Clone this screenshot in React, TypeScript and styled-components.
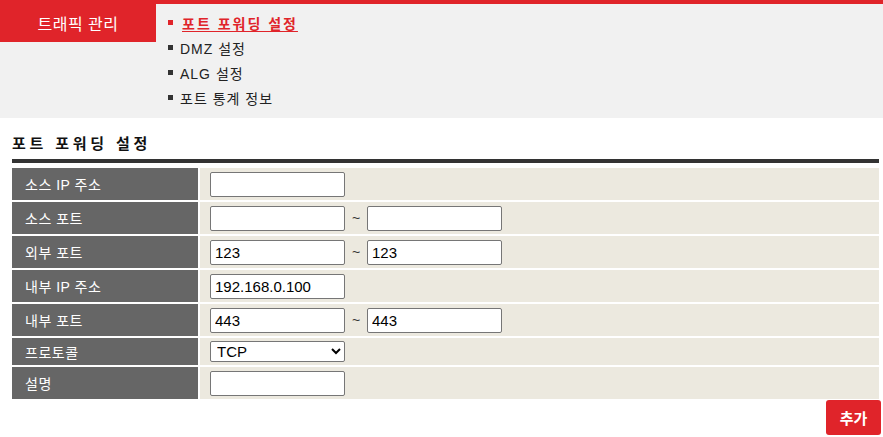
import * as React from 'react';
import styled, { createGlobalStyle } from 'styled-components';

const GlobalStyle = createGlobalStyle`
  html, body {
    margin: 0;
    padding: 0;
    background: #ffffff;
    font-family: 'Liberation Sans', 'Noto Sans CJK KR', sans-serif;
    color: #222222;
  }
`;

const Header = styled.header`
  display: flex;
  align-items: flex-start;
  height: 114px;
  border-top: 4px solid #e0242a;
  background: #f1f1f1;
`;

const Tab = styled.div`
  width: 156px;
  height: 38px;
  display: flex;
  align-items: center;
  justify-content: center;
  background: #e0242a;
  color: #ffffff;
  font-size: 16px;
  letter-spacing: 0.5px;
`;

const Menu = styled.ul`
  list-style: none;
  margin: 0;
  padding: 6px 0 0 12px;
`;

const MenuItem = styled.li<{ $active?: boolean }>`
  display: flex;
  align-items: center;
  height: 25px;
  font-size: 14px;
  color: ${(p) => (p.$active ? '#e0242a' : '#222222')};
  font-weight: ${(p) => (p.$active ? 'bold' : 'normal')};
  letter-spacing: ${(p) => (p.$active ? '2px' : '1px')};
  text-decoration: ${(p) => (p.$active ? 'underline' : 'none')};
  text-underline-offset: 2px;

  &::before {
    content: '';
    width: 5px;
    height: 5px;
    margin-right: ${(p) => (p.$active ? '9px' : '7px')};
    background: ${(p) => (p.$active ? '#e0242a' : '#333333')};
  }
`;

const Content = styled.main`
  padding: 0 4px 0 12px;
`;

const Title = styled.h2`
  margin: 0;
  padding-top: 14px;
  height: 27px;
  font-size: 15px;
  font-weight: bold;
  letter-spacing: 3.8px;
  color: #111111;
  border-bottom: 4px solid #333333;
`;

const Form = styled.div`
  margin-top: 5px;
  display: flex;
  flex-direction: column;
  gap: 2px;
  background: #ffffff;
`;

const Row = styled.div<{ $short?: boolean }>`
  display: grid;
  grid-template-columns: 186px 1fr;
  column-gap: 2px;
  height: ${(p) => (p.$short ? '27px' : '32px')};
`;

const Label = styled.div`
  display: flex;
  align-items: center;
  padding-left: 13px;
  background: #666666;
  color: #ffffff;
  font-size: 14px;
  letter-spacing: 0.5px;
`;

const Value = styled.div`
  display: flex;
  align-items: center;
  padding-left: 10px;
  background: #ece9df;
`;

const Input = styled.input`
  box-sizing: border-box;
  width: 135px;
  height: 25px;
  padding: 0 4px;
  border: 1px solid #767676;
  border-radius: 2px;
  background: #ffffff;
  font-family: 'Liberation Sans', sans-serif;
  font-size: 15px;
  color: #000000;
  outline: none;
`;

const Tilde = styled.span`
  width: 22px;
  text-align: center;
  font-size: 14px;
  color: #333333;
`;

const Select = styled.select`
  box-sizing: border-box;
  width: 135px;
  height: 21px;
  padding: 0 2px;
  border: 1px solid #767676;
  border-radius: 2px;
  background: #ffffff;
  font-family: 'Liberation Sans', sans-serif;
  font-size: 15px;
  color: #000000;
`;

const Actions = styled.div`
  display: flex;
  justify-content: flex-end;
  margin: 1px -2px 0 0;
`;

const AddButton = styled.button`
  width: 55px;
  height: 35px;
  border: none;
  border-radius: 3px;
  background: #e0242a;
  color: #ffffff;
  font-family: 'Noto Sans CJK KR', sans-serif;
  font-size: 15px;
  font-weight: bold;
  cursor: pointer;
`;

type Field = {
  label: string;
  from?: string;
  to?: string;
  range?: boolean;
};

const fields: Field[] = [
  { label: '소스 IP 주소', from: '' },
  { label: '소스 포트', from: '', to: '', range: true },
  { label: '외부 포트', from: '123', to: '123', range: true },
  { label: '내부 IP 주소', from: '192.168.0.100' },
  { label: '내부 포트', from: '443', to: '443', range: true },
];

const App: React.FC = () => {
  return (
    <>
      <GlobalStyle />
      <Header>
        <Tab>트래픽 관리</Tab>
        <Menu>
          <MenuItem $active>포트 포워딩 설정</MenuItem>
          <MenuItem>DMZ 설정</MenuItem>
          <MenuItem>ALG 설정</MenuItem>
          <MenuItem>포트 통계 정보</MenuItem>
        </Menu>
      </Header>
      <Content>
        <Title>포트 포워딩 설정</Title>
        <Form>
          {fields.map((f) => (
            <Row key={f.label}>
              <Label>{f.label}</Label>
              <Value>
                <Input defaultValue={f.from} />
                {f.range && (
                  <>
                    <Tilde>~</Tilde>
                    <Input defaultValue={f.to} />
                  </>
                )}
              </Value>
            </Row>
          ))}
          <Row $short>
            <Label>프로토콜</Label>
            <Value>
              <Select defaultValue="TCP">
                <option>TCP</option>
                <option>UDP</option>
                <option>TCP/UDP</option>
              </Select>
            </Value>
          </Row>
          <Row>
            <Label>설명</Label>
            <Value>
              <Input defaultValue="" />
            </Value>
          </Row>
        </Form>
        <Actions>
          <AddButton>추가</AddButton>
        </Actions>
      </Content>
    </>
  );
};

export default App;
